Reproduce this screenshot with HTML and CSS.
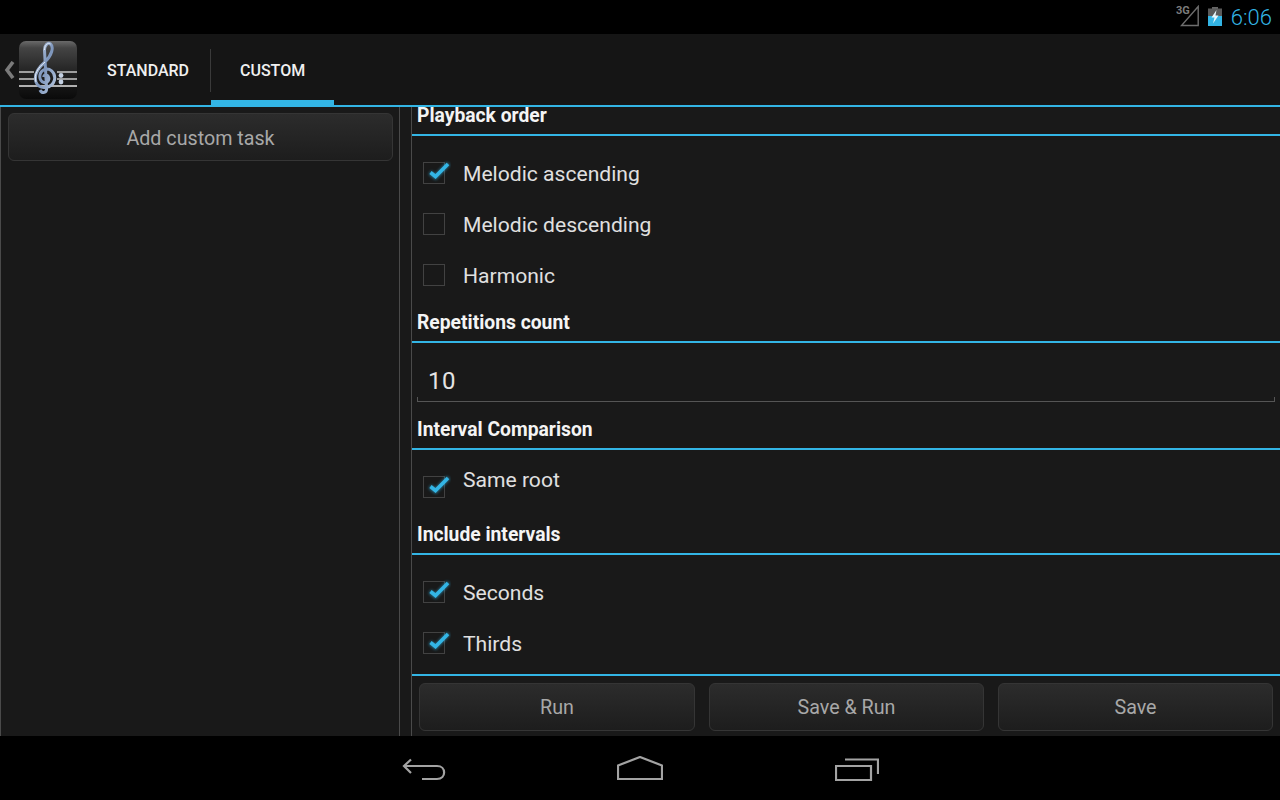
FILE: index.html
```html
<!DOCTYPE html>
<html>
<head>
    <title>Custom tasks</title>
    <meta charset='utf-8'>
    <link rel="stylesheet" href="styles.css">
</head>
<body>
    <svg class="defs" width="0" height="0">
        <defs>
            <linearGradient id="clefGrad" x1="0" y1="0" x2="1" y2="1">
                <stop offset="0" stop-color="#c4d2e6"/>
                <stop offset="0.5" stop-color="#7d95bb"/>
                <stop offset="1" stop-color="#b4c5dd"/>
            </linearGradient>
            <linearGradient id="iconGrad" x1="0" y1="0" x2="0" y2="1">
                <stop offset="0" stop-color="#6a6a6a"/>
                <stop offset="0.12" stop-color="#444"/>
                <stop offset="0.55" stop-color="#222"/>
                <stop offset="1" stop-color="#0a0a0a"/>
            </linearGradient>
            <filter id="glow" x="-40%" y="-40%" width="180%" height="180%">
                <feGaussianBlur stdDeviation="1.6"/>
            </filter>
            <symbol id="tick" viewBox="0 0 26 26">
                <path d="M5 12.5 L10.5 17 L23.5 3.5" fill="none" stroke="#33b5e5" stroke-width="4.5" opacity="0.6" filter="url(#glow)"/>
                <path d="M5.5 12.5 L10.5 16.5 L23 4" fill="none" stroke="#33b5e5" stroke-width="3.6"/>
            </symbol>
        </defs>
    </svg>

    <div class="status-bar">
        <span class="net-label">3G</span>
        <svg class="signal" width="20" height="22" viewBox="0 0 20 22">
            <path d="M18.2 1.5 V20.5 H1.5 Z" fill="none" stroke="#6e6e6e" stroke-width="1.4"/>
        </svg>
        <svg class="battery" width="14" height="19" viewBox="0 0 14 19">
            <rect x="4" y="0" width="6" height="2" fill="#666"/>
            <rect x="0" y="1.5" width="14" height="8" fill="#5a5a5a"/>
            <rect x="0" y="9" width="14" height="10" fill="#33b5e5"/>
            <path d="M8.5 3 L3.5 10.5 H6.5 L5 16.5 L10.5 8.5 H7.5 Z" fill="#e8f6fb"/>
        </svg>
        <span class="clock">6:06</span>
    </div>

    <div class="action-bar">
        <svg class="up-caret" width="11" height="18" viewBox="0 0 11 18">
            <path d="M9 1 L3 9 L9 17" fill="none" stroke="#7a7a7a" stroke-width="3.6"/>
        </svg>
        <svg class="app-icon" width="58" height="58" viewBox="0 0 58 58">
            <rect x="0" y="0" width="58" height="58" rx="7" fill="url(#iconGrad)"/>
            <path d="M0 31 H15 M38 31 H58 M0 38 H15 M38 38 H58" stroke="#c8c8c8" stroke-width="1.6"/>
            <path d="M0 45 H58" stroke="#e6e6e6" stroke-width="1.6"/>
            <path d="M21 49 C23 53 28 52 27.5 47 L25.5 9 C25.5 4 29 1 31.5 3 C35 6 33 14 26 21 C19 27 14.5 33 17 41 C20 49 33 48 35.5 39 C37 31 30 26 24.5 29 C19.5 32 19.5 40 25 41.5 C29 42.5 31 38 29 35 C27.5 33 25 34 24.5 36" fill="none" stroke="url(#clefGrad)" stroke-width="3"/>
            <path d="M26 21 C19 27 14.5 33 17 41 M25.5 9 C25.5 4 29 1 31.5 3" fill="none" stroke="#e4ecf6" stroke-width="1"/>
            <circle cx="42" cy="34.5" r="2.4" fill="#c3d0e2"/>
            <circle cx="42" cy="41" r="2.4" fill="#c3d0e2"/>
        </svg>
        <div class="tab tab-standard">STANDARD</div>
        <div class="tab-sep"></div>
        <div class="tab tab-custom tab-active">CUSTOM</div>
    </div>

    <div class="main">
        <div class="task-pane">
            <button class="btn btn-add">Add custom task</button>
        </div>
        <div class="detail-pane">
            <div class="form-scroll">
                <div class="section-title section-title-first">Playback order</div>
                <div class="check-list">
                    <div class="check-row">
                        <span class="box"><svg class="tick"><use href="#tick"/></svg></span>
                        <span class="check-label">Melodic ascending</span>
                    </div>
                    <div class="check-row">
                        <span class="box"></span>
                        <span class="check-label">Melodic descending</span>
                    </div>
                    <div class="check-row">
                        <span class="box"></span>
                        <span class="check-label">Harmonic</span>
                    </div>
                </div>

                <div class="section-title">Repetitions count</div>
                <div class="edit-wrap">
                    <div class="edit-field">10</div>
                </div>

                <div class="section-title">Interval Comparison</div>
                <div class="check-list check-list-single">
                    <div class="check-row check-row-raised">
                        <span class="box"><svg class="tick"><use href="#tick"/></svg></span>
                        <span class="check-label">Same root</span>
                    </div>
                </div>

                <div class="section-title">Include intervals</div>
                <div class="check-list">
                    <div class="check-row">
                        <span class="box"><svg class="tick"><use href="#tick"/></svg></span>
                        <span class="check-label">Seconds</span>
                    </div>
                    <div class="check-row">
                        <span class="box"><svg class="tick"><use href="#tick"/></svg></span>
                        <span class="check-label">Thirds</span>
                    </div>
                </div>
            </div>
            <div class="form-footer">
                <button class="btn btn-run">Run</button>
                <button class="btn">Save &amp; Run</button>
                <button class="btn">Save</button>
            </div>
        </div>
    </div>

    <div class="nav-bar">
        <svg class="nav-back" width="44" height="24" viewBox="0 0 44 24">
            <path d="M9 1.5 L2 8 L9 15 M2 8 H35 C44.5 8 44.5 21 35 21 H20" fill="none" stroke="#a3a3a3" stroke-width="2.2"/>
        </svg>
        <svg class="nav-home" width="46" height="24" viewBox="0 0 46 24">
            <path d="M1 9.5 L23 1 L45 9.5 V23 H1 Z" fill="none" stroke="#a3a3a3" stroke-width="2.2"/>
        </svg>
        <svg class="nav-recent" width="44" height="24" viewBox="0 0 44 24">
            <path d="M1 8 H36 V22 H1 Z M10 1.5 H43 V16" fill="none" stroke="#a3a3a3" stroke-width="2.2"/>
        </svg>
    </div>
</body>
</html>
```
FILE: styles.css
```css
html, body {
    margin: 0;
    height: 100%;
}
body {
    width: 1280px;
    height: 800px;
    overflow: hidden;
    display: flex;
    flex-direction: column;
    background: #000;
    color: #e4e4e4;
    font-family: Roboto, "Liberation Sans", sans-serif;
}
.defs {
    position: absolute;
}
.status-bar {
    height: 34px;
    flex: none;
    display: flex;
    align-items: flex-start;
    background: #000;
    padding-right: 8px;
    justify-content: flex-end;
}
.net-label {
    font-size: 11px;
    font-weight: 700;
    color: #7c7c7c;
    margin-top: 4px;
    margin-right: -10px;
}
.signal {
    margin-top: 5px;
    margin-right: 8px;
}
.battery {
    margin-top: 7px;
    margin-right: 9px;
}
.clock {
    font-size: 22px;
    font-weight: 300;
    color: #33b5e5;
    line-height: 36px;
}
.action-bar {
    height: 71px;
    flex: none;
    display: flex;
    align-items: stretch;
    background: #151515;
    border-bottom: 2px solid #33b5e5;
}
.up-caret {
    margin: 27px 2px 0 4px;
}
.app-icon {
    margin: 7px 0 0 2px;
}
.tab {
    display: flex;
    align-items: center;
    height: 66px;
    padding: 6px 0 0;
    box-sizing: border-box;
    font-size: 16px;
    font-weight: 500;
    color: #f0f0f0;
}
.tab-standard {
    margin-left: 1px;
    padding-left: 29px;
    width: 132px;
}
.tab-sep {
    width: 1px;
    height: 43px;
    margin-top: 15px;
    background: #3a3a3a;
}
.tab-custom {
    width: 123px;
    padding-left: 29px;
    height: 71px;
}
.tab-active {
    border-bottom: 5px solid #33b5e5;
}
.main {
    flex: 1;
    min-height: 0;
    display: flex;
    background: #191919;
}
.task-pane {
    width: 400px;
    flex: none;
    box-sizing: border-box;
    border-left: 1px solid #4a4a4a;
    border-right: 1px solid #4a4a4a;
    padding: 6px 6px 0 7px;
    margin-right: 11px;
}
.detail-pane {
    flex: 1;
    min-width: 0;
    display: flex;
    flex-direction: column;
    border-left: 1px solid #4a4a4a;
}
.form-scroll {
    flex: 1;
    min-height: 0;
}
.section-title {
    padding: 6px 5px 0;
    box-sizing: border-box;
    height: 36px;
    line-height: 20px;
    font-size: 19.3px;
    font-weight: 700;
    color: #f4f4f4;
    border-bottom: 2px solid #33b5e5;
}
.section-title-first {
    height: 29px;
    padding-top: 0;
    line-height: 18px;
}
.check-list {
    padding: 12px 0 6px 11px;
}
.check-list-single {
    padding: 12px 0 6px 11px;
}
.check-row {
    height: 51px;
    display: flex;
    align-items: center;
}
.check-row-raised .check-label {
    padding-bottom: 16px;
}
.box {
    width: 20px;
    height: 20px;
    flex: none;
    position: relative;
    border: 1px solid #424242;
    margin: -2px 18px 0 0;
}
.tick {
    position: absolute;
    left: 1px;
    top: -3px;
    width: 26px;
    height: 26px;
}
.check-label {
    font-size: 21.1px;
    color: #e0e0e0;
}
.edit-wrap {
    height: 71px;
    box-sizing: border-box;
    padding: 0 5px;
}
.edit-field {
    height: 59px;
    box-sizing: border-box;
    padding: 23px 0 0 10px;
    line-height: 30px;
    font-size: 24px;
    letter-spacing: 0.6px;
    color: #e4e4e4;
    border-bottom: 1px solid #555;
    border-left: 1px solid #555;
    border-right: 1px solid #555;
    border-image: linear-gradient(to bottom, transparent 92%, #555 92%) 1;
}
.form-footer {
    height: 62px;
    flex: none;
    box-sizing: border-box;
    border-top: 2px solid #33b5e5;
    padding: 7px 7px 0;
    display: flex;
    gap: 14px;
}
.form-footer .btn {
    padding-top: 0;
}
.btn {
    flex: 1;
    height: 48px;
    padding: 2px 0 0;
    border: 1px solid #353535;
    border-radius: 6px;
    background: linear-gradient(to bottom, #2c2c2c, #1d1d1d);
    font-family: inherit;
    font-size: 19.7px;
    color: #a8a8a8;
}
.btn-run {
    flex: none;
    width: 276px;
}
.btn-add {
    display: block;
    width: 385px;
    flex: none;
}
.nav-bar {
    height: 64px;
    flex: none;
    background: #000;
    position: relative;
}
.nav-back, .nav-home, .nav-recent {
    position: absolute;
}
.nav-back {
    left: 402px;
    top: 22px;
}
.nav-home {
    left: 617px;
    top: 20px;
}
.nav-recent {
    left: 835px;
    top: 22px;
}
```
